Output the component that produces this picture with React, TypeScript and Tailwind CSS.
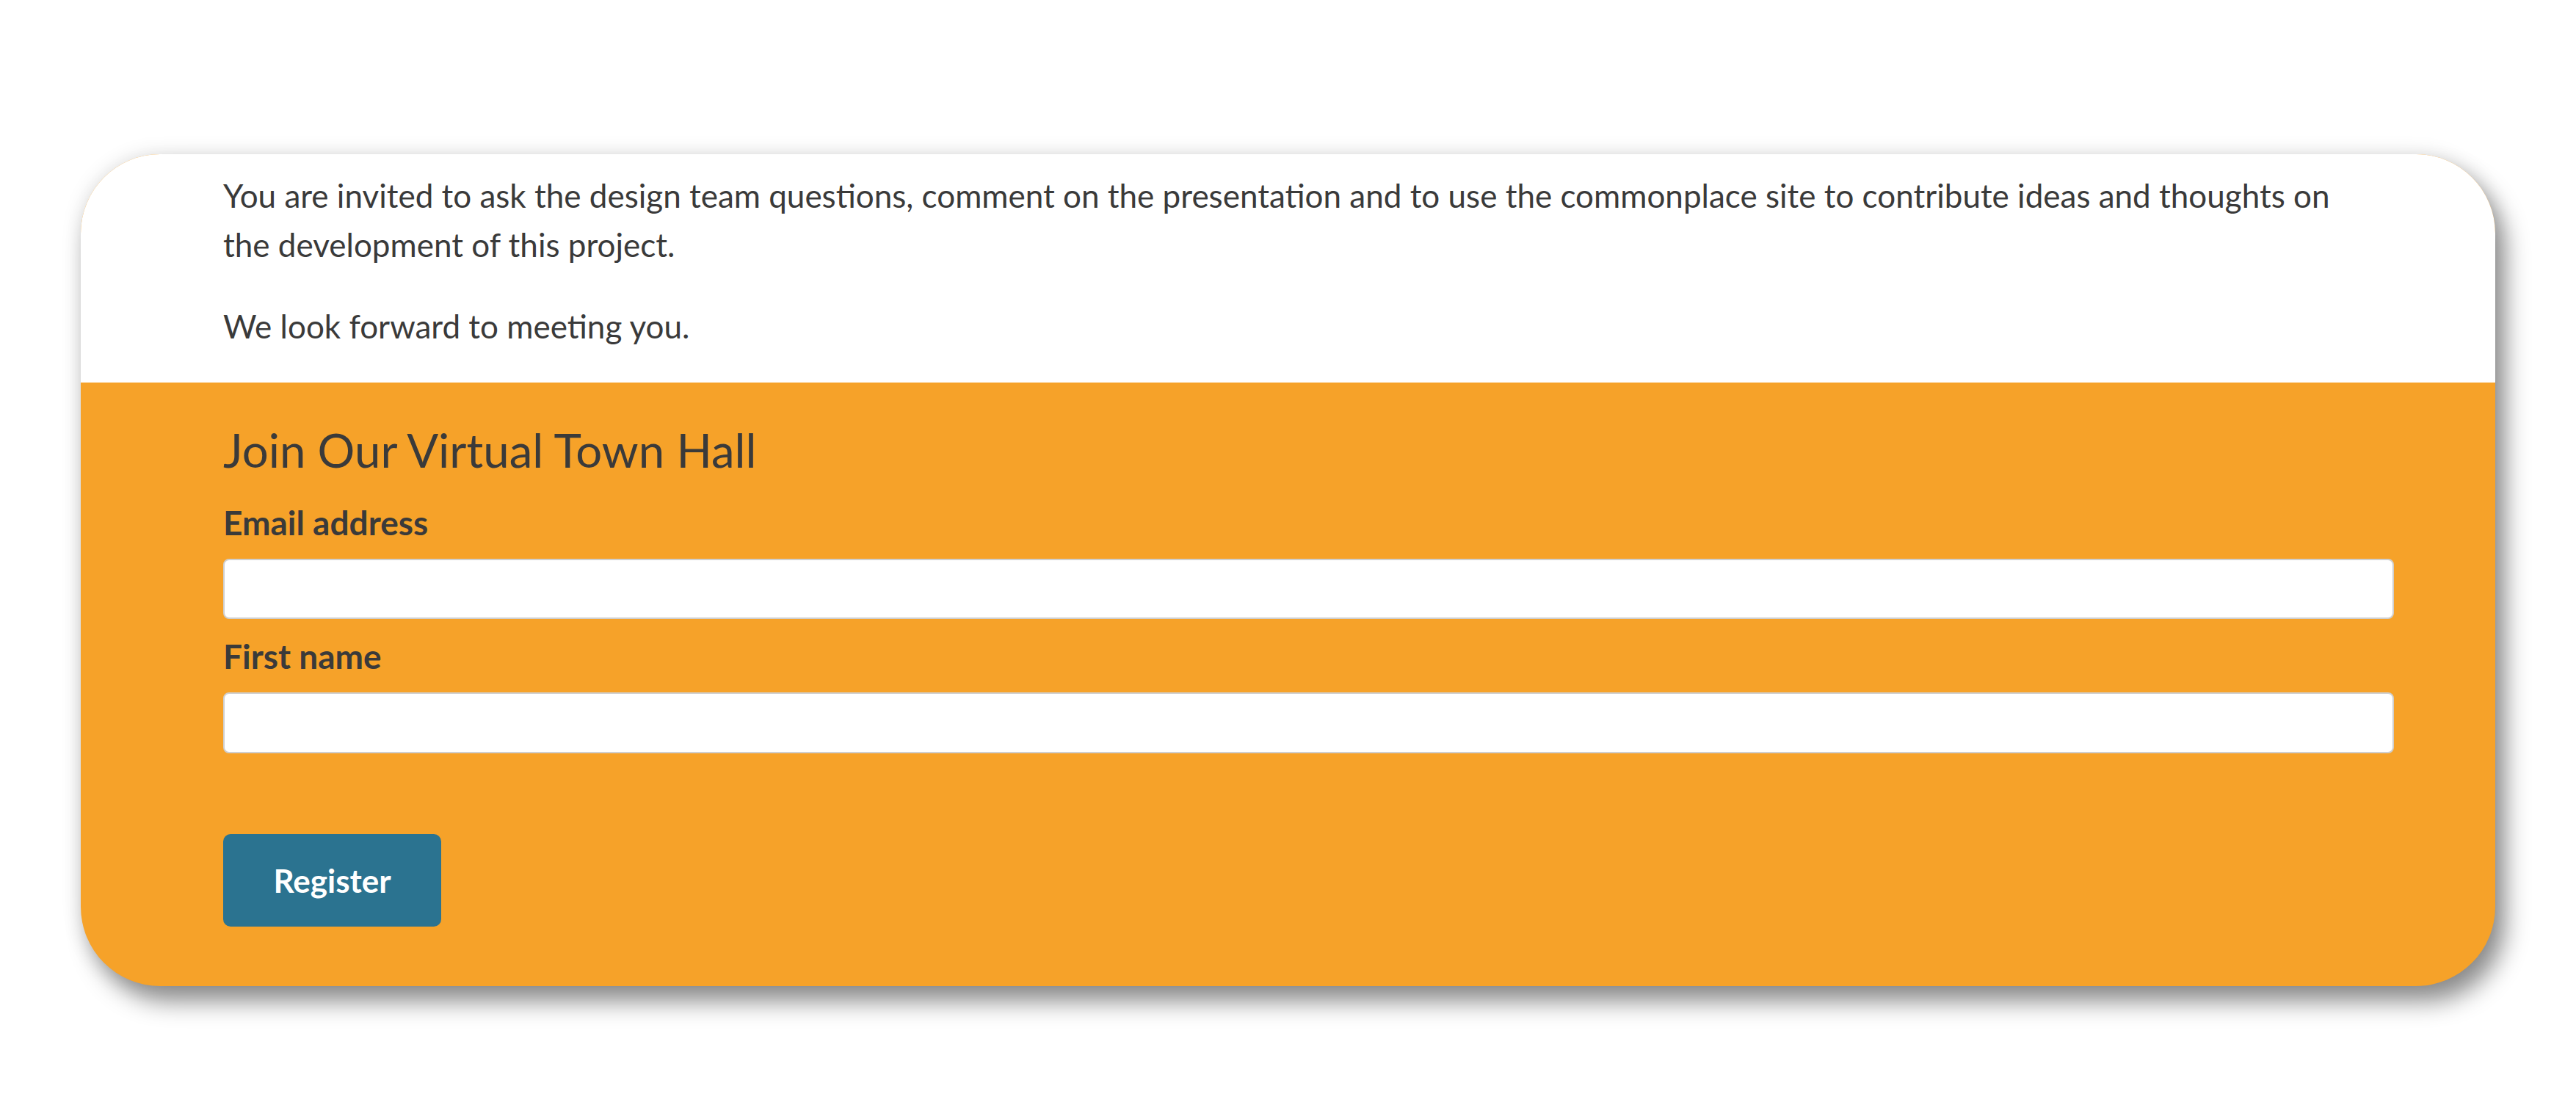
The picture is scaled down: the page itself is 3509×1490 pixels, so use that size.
import React from "react";

export default function App() {
  return (
    <div
      className="min-h-screen w-full bg-white"
      style={{ fontFamily: "Lato, 'Noto Sans', sans-serif" }}
    >
      <div className="pt-[210px] pl-[110px]">
        <div className="w-[3289px] h-[1133px] rounded-[108px] overflow-hidden bg-[#f6a229] shadow-[0_0_28px_rgba(0,0,0,0.12),14px_22px_32px_rgba(0,0,0,0.42)]">
          <div className="h-[311px] bg-white pl-[194px] pr-[138px] pt-[23px] text-[#3a3a3a] text-[44px] leading-[67px]">
            <p className="max-w-[2920px]">
              You are invited to ask the design team questions, comment on the presentation and to use the commonplace site to contribute ideas and thoughts on the development of this project.
            </p>
            <p className="mt-[44px]">We look forward to meeting you.</p>
          </div>
          <div className="pl-[194px] pr-[138px] pt-[52px] text-[#3a3a3a]">
            <h2 className="text-[63.5px] leading-[80px] font-normal">Join Our Virtual Town Hall</h2>
            <label className="mt-[30px] block text-[46px] leading-[58px] font-bold">Email address</label>
            <input
              type="text"
              className="mt-[20px] block h-[82px] w-full rounded-[8px] border-2 border-[#cfcfcf] bg-white"
            />
            <label className="mt-[22px] block text-[46px] leading-[58px] font-bold">First name</label>
            <input
              type="text"
              className="mt-[20px] block h-[83px] w-full rounded-[8px] border-2 border-[#cfcfcf] bg-white"
            />
            <button className="mt-[110px] flex h-[126px] w-[297px] items-center justify-center rounded-[10px] bg-[#2b7390] text-[44px] font-bold text-white">
              Register
            </button>
          </div>
        </div>
      </div>
    </div>
  );
}
